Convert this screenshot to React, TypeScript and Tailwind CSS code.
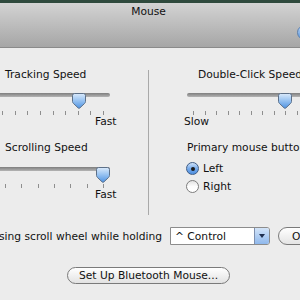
import React from "react";

const FONT = { fontFamily: '"DejaVu Sans", Verdana, sans-serif' };

function Thumb() {
  return (
    <svg width="14" height="16" viewBox="0 0 14 16" className="absolute top-0" style={{}}>
      <defs>
        <linearGradient id="tg" x1="0" y1="0" x2="0" y2="1">
          <stop offset="0" stopColor="#dbeafb" />
          <stop offset="0.45" stopColor="#9cc5f2" />
          <stop offset="1" stopColor="#4f93e2" />
        </linearGradient>
      </defs>
      <path
        d="M2.5 0.5 H11.5 Q13.5 0.5 13.5 2.5 V8.5 Q13.5 9.5 12.5 10.5 L7.8 15 Q7 15.6 6.2 15 L1.5 10.5 Q0.5 9.5 0.5 8.5 V2.5 Q0.5 0.5 2.5 0.5 Z"
        fill="url(#tg)"
        stroke="#5d7088"
        strokeWidth="1"
      />
    </svg>
  );
}

function Ticks({ n, ml, w }: { n: number; ml: number; w: number }) {
  return (
    <div className="flex justify-between h-[4px]" style={{ marginLeft: ml, width: w }}>
      {Array.from({ length: n }).map((_, i) => (
        <div key={i} className="w-px h-[4px] bg-[#8e8e8e]" />
      ))}
    </div>
  );
}

function Track({ ml, w, thumb, roundEnd }: { ml: number; w: number; thumb: number; roundEnd?: boolean }) {
  return (
    <div className="relative h-[16px]" style={{ marginLeft: ml, width: w }}>
      <div
        className={
          "mt-[4px] h-[4px] bg-gradient-to-b from-[#7e7e7e] to-[#b4b4b4] " +
          (roundEnd ? "rounded-full" : "rounded-l-full")
        }
      />
      <div className="absolute top-0" style={{ left: thumb }}>
        <Thumb />
      </div>
    </div>
  );
}

function Radio({ checked, label, mt }: { checked: boolean; label: string; mt: string }) {
  return (
    <div className={"flex items-center gap-[4px] ml-[37px] h-[13px] " + mt}>
      {checked ? (
        <div className="w-[13px] h-[13px] rounded-full border border-[#3f5d86] bg-gradient-to-b from-[#cfe2f8] via-[#78acec] to-[#4d8fe0] flex items-center justify-center">
          <div className="w-[4px] h-[4px] rounded-full bg-[#1b1b1b]" />
        </div>
      ) : (
        <div className="w-[13px] h-[13px] rounded-full border border-[#7d7d7d] bg-gradient-to-b from-[#e2e2e2] via-[#fdfdfd] to-[#ffffff]" />
      )}
      <span className="leading-[13px]">{label}</span>
    </div>
  );
}

export default function App() {
  return (
    <div
      className="relative w-[300px] h-[300px] overflow-hidden bg-[#ececec] text-[10.7px] leading-[13px] text-[#111] flex flex-col"
      style={FONT}
    >
      <div className="h-[3px] shrink-0 bg-[#2f4a3d]" />
      <div className="h-[45px] shrink-0 bg-gradient-to-b from-[#d3d3d3] to-[#a6a6a6] border-b border-[#8a8a8a] flex justify-center pr-[3px] pt-[2px]">
        <span className="leading-[13px]">Mouse</span>
      </div>
      <div className="absolute left-[297px] top-[25px] w-[15px] h-[15px] rounded-full border border-[#5a7fae] bg-gradient-to-b from-[#b9d4f3] to-[#5b96dc]" />

      <div className="flex shrink-0">
        <div className="w-[148px] flex flex-col shrink-0">
          <div className="mt-[20px] pl-[5px] whitespace-nowrap">Tracking Speed</div>
          <div className="mt-[8px]">
            <Track ml={-10} w={120} thumb={82} roundEnd />
          </div>
          <div className="mt-[2px]">
            <Ticks n={9} ml={2} w={102} />
          </div>
          <div className="ml-[95px] whitespace-nowrap">Fast</div>
          <div className="mt-[13px] pl-[5px] whitespace-nowrap">Scrolling Speed</div>
          <div className="mt-[9px]">
            <Track ml={-10} w={120} thumb={106} roundEnd />
          </div>
          <div className="mt-[1px]">
            <Ticks n={7} ml={5} w={99} />
          </div>
          <div className="ml-[95px] whitespace-nowrap">Fast</div>
        </div>

        <div className="w-px h-[145px] mt-[22px] bg-[#a9a9a9] shrink-0" />

        <div className="flex flex-col flex-1 min-w-0">
          <div className="mt-[20px] pl-[49px] whitespace-nowrap">Double-Click Speed</div>
          <div className="mt-[8px]">
            <Track ml={38} w={200} thumb={91} />
          </div>
          <div className="mt-[2px]">
            <Ticks n={10} ml={44} w={105} />
          </div>
          <div className="ml-[35px] whitespace-nowrap">Slow</div>
          <div className="mt-[13px] ml-[38px] whitespace-nowrap">Primary mouse button:</div>
          <Radio checked label="Left" mt="mt-[8px]" />
          <Radio checked={false} label="Right" mt="mt-[5px]" />
        </div>
      </div>

      <div className="flex items-center h-[18px] mt-[12px] shrink-0">
        <div className="w-[162px] flex justify-end shrink-0">
          <span className="whitespace-nowrap shrink-0 pt-[1px]">Zoom using scroll wheel while holding</span>
        </div>
        <div className="ml-[8px] w-[100px] h-[18px] flex border border-[#8c8c8c] rounded-r-[3px] bg-white shrink-0">
          <div className="flex-1 pl-[4px] flex items-center whitespace-nowrap">^ Control</div>
          <div className="w-[15px] h-full border-l border-[#7d8fae] rounded-r-[2px] bg-gradient-to-b from-[#d3e4f8] to-[#8fb8ec] flex items-center justify-center">
            <svg width="6" height="4" viewBox="0 0 6 4">
              <path d="M0 0 H6 L3 4 Z" fill="#1f2f4f" />
            </svg>
          </div>
        </div>
        <div className="ml-[8px] w-[80px] h-[18px] rounded-full border border-[#7a7a7a] bg-gradient-to-b from-[#ffffff] to-[#e4e4e4] pl-[13px] flex items-center whitespace-nowrap shrink-0">
          Options…
        </div>
      </div>

      <div className="mt-[22px] ml-[67px] w-[163px] h-[17px] rounded-full border border-[#7a7a7a] bg-gradient-to-b from-[#ffffff] to-[#e2e2e2] flex items-center justify-center whitespace-nowrap shrink-0">
        Set Up Bluetooth Mouse...
      </div>
    </div>
  );
}
